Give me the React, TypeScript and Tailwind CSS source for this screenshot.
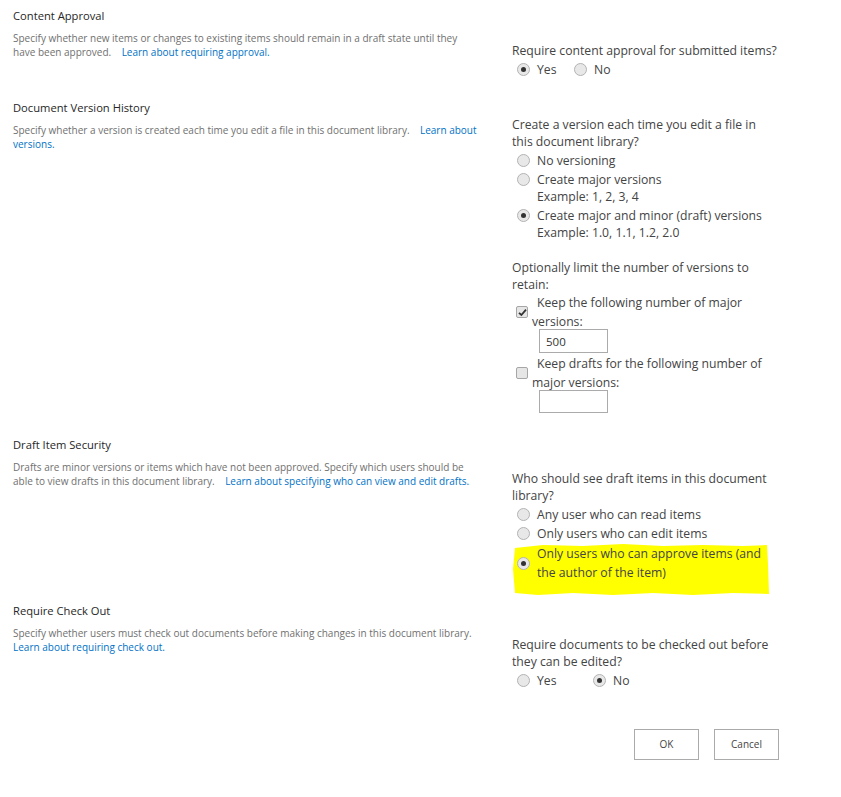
import React from "react";

type SectionProps = {
  title: string;
  desc: string;
  link: string;
  rightClass: string;
  rowClass: string;
  linkOnNewLine?: boolean;
  children: React.ReactNode;
};

const Radio: React.FC<{ checked?: boolean }> = ({ checked }) => (
  <span className="w-[13px] h-[13px] shrink-0 rounded-full border border-[#b3b3b3] bg-[#e8e8e8] flex items-center justify-center">
    {checked && <span className="w-[5px] h-[5px] rounded-full bg-[#333]" />}
  </span>
);

const Checkbox: React.FC<{ checked?: boolean }> = ({ checked }) => (
  <span className="w-[12px] h-[12px] shrink-0 rounded-[2px] border border-[#a6a6a6] bg-[#e6e6e6] flex items-center justify-center">
    {checked && (
      <svg width="9" height="9" viewBox="0 0 9 9">
        <path d="M1 4.8 L3.4 7 L8 1.6" fill="none" stroke="#333" strokeWidth="1.8" />
      </svg>
    )}
  </span>
);

const Option: React.FC<{ checked?: boolean; children: React.ReactNode }> = ({ checked, children }) => (
  <div className="mt-[2px] pl-[5px] flex items-start gap-[7px] leading-[17px]">
    <span className="pt-[2px]">
      <Radio checked={checked} />
    </span>
    <div>{children}</div>
  </div>
);

const Section: React.FC<SectionProps> = ({ title, desc, link, rightClass, rowClass, linkOnNewLine, children }) => (
  <div className={`flex ${rowClass}`}>
    <div className="w-[499px] shrink-0">
      <h3 className="text-[11.2px] leading-[17px] text-[#262626]">{title}</h3>
      <p className="mt-[7px] w-[468px] text-[10px] leading-[14px] text-[#707070]">
        <span>{desc}</span>
        {linkOnNewLine ? <br /> : "\u00a0\u00a0\u00a0 "}
        <a className="text-[#0072c6]">{link}</a>
      </p>
    </div>
    <div className={`w-[268px] text-[12.2px] leading-[17px] text-[#444] ${rightClass}`}>{children}</div>
  </div>
);

export default function App() {
  return (
    <div className="min-h-[797px] bg-white pl-[13px] pt-[7px] font-['Open_Sans',sans-serif]">
      <Section
        title="Content Approval"
        desc="Specify whether new items or changes to existing items should remain in a draft state until they have been approved."
        link="Learn about requiring approval."
        rightClass="pt-[35px]"
        rowClass="pb-[21px]"
      >
        <div>Require content approval for submitted items?</div>
        <div className="mt-[2px] pl-[5px] flex items-center">
          <div className="w-[57px] flex items-center gap-[7px]">
            <Radio checked />
            <span>Yes</span>
          </div>
          <div className="flex items-center gap-[7px]">
            <Radio />
            <span>No</span>
          </div>
        </div>
      </Section>

      <Section
        title="Document Version History"
        desc="Specify whether a version is created each time you edit a file in this document library."
        link="Learn about versions."
        rightClass="pt-[17px]"
        rowClass="pb-[23px]"
      >
        <div>
          Create a version each time you edit a file in
          <br />
          this document library?
        </div>
        <Option>No versioning</Option>
        <Option>
          Create major versions
          <br />
          Example: 1, 2, 3, 4
        </Option>
        <Option checked>
          Create major and minor (draft) versions
          <br />
          Example: 1.0, 1.1, 1.2, 2.0
        </Option>

        <div className="mt-[18px]">Optionally limit the number of versions to retain:</div>
        <div className="pl-[4px] flex items-center gap-[4px]">
          <Checkbox checked />
          <div className="flex-1 leading-[19px] indent-[5px]">Keep the following number of major versions:</div>
        </div>
        <div className="-mt-[2px] ml-[27px] w-[69px] h-[24px] border border-[#ababab] pl-[6px] flex items-center text-[11.5px] text-[#333]">
          500
        </div>
        <div className="mt-[1px] pl-[4px] flex items-center gap-[4px]">
          <Checkbox />
          <div className="flex-1 leading-[19px] indent-[5px]">Keep drafts for the following number of major versions:</div>
        </div>
        <div className="-mt-[2px] ml-[27px] w-[69px] h-[23px] border border-[#ababab]" />
      </Section>

      <Section
        title="Draft Item Security"
        desc="Drafts are minor versions or items which have not been approved. Specify which users should be able to view drafts in this document library."
        link="Learn about specifying who can view and edit drafts."
        rightClass="pt-[34px]"
        rowClass="pb-[20px]"
      >
        <div>Who should see draft items in this document library?</div>
        <Option>Any user who can read items</Option>
        <Option>Only users who can edit items</Option>
        <div className="relative mt-[2px]">
          <svg className="absolute left-[1px] top-0" width="256" height="52" viewBox="0 0 256 52">
            <path
              d="M2 4 L30 1 L70 2 L110 0 L150 2 L190 1 L230 2 L254 1 L255 20 L256 50 L220 49 L180 51 L140 49 L100 51 L60 49 L25 51 L2 49 L0 25 Z"
              fill="#ffff00"
            />
          </svg>
          <div className="relative pl-[5px] flex items-center gap-[7px] leading-[19px]">
            <Radio checked />
            <div>
              Only users who can approve items (and
              <br />
              the author of the item)
            </div>
          </div>
        </div>
      </Section>

      <Section
        title="Require Check Out"
        desc="Specify whether users must check out documents before making changes in this document library."
        link="Learn about requiring check out."
        linkOnNewLine
        rightClass="pt-[34px]"
        rowClass=""
      >
        <div>Require documents to be checked out before they can be edited?</div>
        <div className="mt-[2px] pl-[5px] flex items-center">
          <div className="w-[76px] flex items-center gap-[7px]">
            <Radio />
            <span>Yes</span>
          </div>
          <div className="flex items-center gap-[7px]">
            <Radio checked />
            <span>No</span>
          </div>
        </div>
        <div className="mt-[40px] ml-[122px] flex gap-[15px]">
          <button className="w-[65px] h-[31px] shrink-0 border border-[#ababab] bg-white text-[10px] text-[#444]">OK</button>
          <button className="w-[65px] h-[31px] shrink-0 border border-[#ababab] bg-white text-[10px] text-[#444]">Cancel</button>
        </div>
      </Section>
    </div>
  );
}
